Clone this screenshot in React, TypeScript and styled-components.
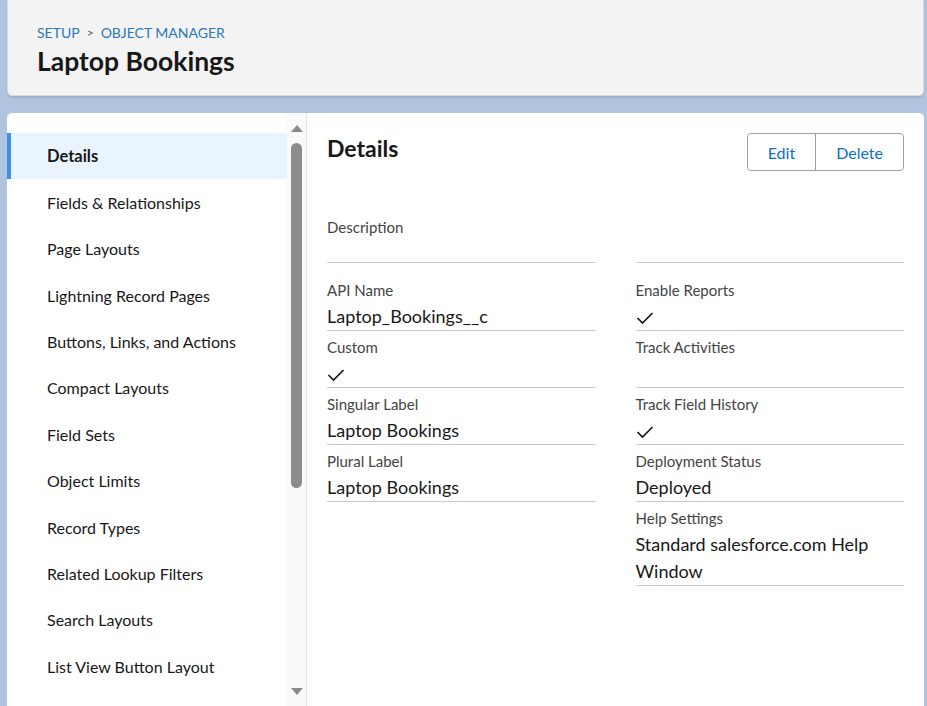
import React from "react";
import styled, { createGlobalStyle } from "styled-components";

const GlobalStyle = createGlobalStyle`
  html, body {
    margin: 0;
    padding: 0;
    height: 100%;
    overflow: hidden;
    background: #b0c4df;
    font-family: "Lato", "Noto Sans", sans-serif;
    color: #181818;
  }
`;

const Page = styled.div`
  height: 706px;
  padding: 0 3px 0 7px;
  display: flex;
  flex-direction: column;
  gap: 17px;
  box-sizing: border-box;
`;

const Header = styled.header`
  background: #f3f3f3;
  height: 96px;
  box-sizing: border-box;
  padding: 23px 29px 0;
  border-radius: 0 0 5px 5px;
  border: 1px solid #d8d8d8;
  border-top: none;
  box-shadow: 0 2px 2px rgba(0, 0, 0, 0.1);
`;

const Crumbs = styled.div`
  font-size: 14px;
  line-height: 20px;
  color: #2c77ba;
  display: flex;
  gap: 7px;
`;

const Sep = styled.span`
  color: #555;
  font-size: 12px;
`;

const Title = styled.h1`
  margin: 2px 0 0;
  font-size: 26.5px;
  line-height: 32px;
  font-weight: 700;
  color: #181818;
`;

const Card = styled.main`
  flex: 1;
  min-height: 0;
  background: #fff;
  border-radius: 5px 5px 0 0;
  display: flex;
  overflow: hidden;
`;

const Sidebar = styled.aside`
  width: 299px;
  display: flex;
  border-right: 1px solid #e5e5e5;
  flex-shrink: 0;
`;

const Nav = styled.nav`
  flex: 1;
  padding-top: 20px;
`;

const NavItem = styled.div<{ $active?: boolean }>`
  height: 46.36px;
  display: flex;
  align-items: center;
  padding-left: 40px;
  font-size: ${(p) => (p.$active ? "16.5px" : "16px")};
  font-weight: ${(p) => (p.$active ? 700 : 400)};
  color: #181818;
  background: ${(p) => (p.$active ? "#eaf4fe" : "transparent")};
  box-shadow: ${(p) => (p.$active ? "inset 4px 0 0 #3d8ef0" : "none")};
`;

const Scroll = styled.div`
  width: 19px;
  background: #fafafa;
  display: flex;
  flex-direction: column;
  align-items: center;
  padding: 12px 0 11px;
  box-sizing: border-box;
`;

const Arrow = styled.div<{ $down?: boolean }>`
  width: 0;
  height: 0;
  border-left: 6px solid transparent;
  border-right: 6px solid transparent;
  ${(p) =>
    p.$down
      ? "border-top: 7px solid #8a8a8a; margin-top: auto;"
      : "border-bottom: 7px solid #8a8a8a;"}
`;

const Thumb = styled.div`
  width: 11px;
  height: 345px;
  margin-top: 11px;
  border-radius: 6px;
  background: #8c8c8c;
`;

const Content = styled.section`
  flex: 1;
  padding: 20px 20px 0 20px;
`;

const TopRow = styled.div`
  display: flex;
  justify-content: space-between;
  align-items: flex-start;
`;

const Heading = styled.h2`
  margin: 1px 0 0;
  font-size: 23px;
  line-height: 28px;
  font-weight: 700;
`;

const ButtonGroup = styled.div`
  display: flex;
  border: 1px solid #a0a0a0;
  border-radius: 4px;
  height: 38px;
  box-sizing: border-box;
`;

const Button = styled.button`
  background: #fff;
  border: none;
  font-family: inherit;
  font-size: 16px;
  color: #0b6fcc;
  padding: 0 20px;
  border-radius: 4px;
  & + & {
    border-left: 1px solid #a0a0a0;
    border-radius: 0 4px 4px 0;
  }
`;

const Grid = styled.div`
  display: grid;
  grid-template-columns: 1fr 1fr;
  column-gap: 40px;
  margin-top: 40px;
`;

const Field = styled.div<{ $blank?: boolean; $spaced?: boolean }>`
  padding-top: 6px;
  margin-bottom: ${(p) => (p.$spaced ? "11px" : "0")};
  border-bottom: ${(p) => (p.$blank ? "none" : "1px solid #c9c9c9")};
`;

const Label = styled.div`
  font-size: 15px;
  line-height: 20px;
  min-height: 20px;
  color: #444;
`;

const Value = styled.div<{ $short?: boolean }>`
  display: flow-root;
  margin-top: 3px;
  font-size: 18px;
  line-height: 27px;
  min-height: ${(p) => (p.$short ? "22px" : "27px")};
  color: #181818;
`;

const CheckMark = styled.svg`
  display: block;
  margin-top: 8px;
`;

const Check = () => (
  <CheckMark width="18" height="14" viewBox="0 0 18 14">
    <polyline points="1.5,7 6.5,12 16.5,2" fill="none" stroke="#181818" strokeWidth="1.7" />
  </CheckMark>
);

const navItems = [
  "Details",
  "Fields & Relationships",
  "Page Layouts",
  "Lightning Record Pages",
  "Buttons, Links, and Actions",
  "Compact Layouts",
  "Field Sets",
  "Object Limits",
  "Record Types",
  "Related Lookup Filters",
  "Search Layouts",
  "List View Button Layout",
];

type F = { label: string; value?: React.ReactNode; blank?: boolean; short?: boolean };

const fields: F[] = [
  { label: "Description", short: true },
  { label: "", short: true },
  { label: "API Name", value: "Laptop_Bookings__c" },
  { label: "Enable Reports", value: <Check /> },
  { label: "Custom", value: <Check /> },
  { label: "Track Activities" },
  { label: "Singular Label", value: "Laptop Bookings" },
  { label: "Track Field History", value: <Check /> },
  { label: "Plural Label", value: "Laptop Bookings" },
  { label: "Deployment Status", value: "Deployed" },
  { label: "", blank: true },
  { label: "Help Settings", value: <>Standard salesforce.com Help<br />Window</> },
];

export default function App() {
  return (
    <>
      <GlobalStyle />
      <Page>
        <Header>
          <Crumbs>
            <span>SETUP</span>
            <Sep>&gt;</Sep>
            <span>OBJECT MANAGER</span>
          </Crumbs>
          <Title>Laptop Bookings</Title>
        </Header>
        <Card>
          <Sidebar>
            <Nav>
              {navItems.map((n, i) => (
                <NavItem key={n} $active={i === 0}>
                  {n}
                </NavItem>
              ))}
            </Nav>
            <Scroll>
              <Arrow />
              <Thumb />
              <Arrow $down />
            </Scroll>
          </Sidebar>
          <Content>
            <TopRow>
              <Heading>Details</Heading>
              <ButtonGroup>
                <Button>Edit</Button>
                <Button>Delete</Button>
              </ButtonGroup>
            </TopRow>
            <Grid>
              {fields.map((f, i) => (
                <Field key={i} $blank={f.blank} $spaced={i < 2}>
                  <Label>{f.label}</Label>
                  {!f.blank && <Value $short={f.short}>{f.value}</Value>}
                </Field>
              ))}
            </Grid>
          </Content>
        </Card>
      </Page>
    </>
  );
}
